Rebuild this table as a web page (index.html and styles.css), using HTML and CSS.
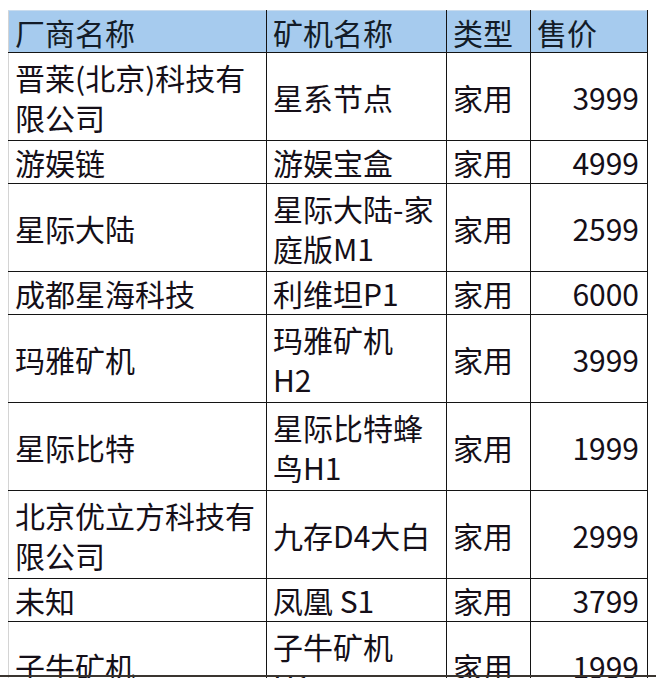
FILE: index.html
```html
<!DOCTYPE html>
<html lang="zh-CN">
<head>
<meta charset="utf-8">
<title>矿机列表</title>
<link rel="stylesheet" href="styles.css">
</head>
<body>
<table class="sheet">
  <colgroup>
    <col class="c-vendor">
    <col class="c-model">
    <col class="c-type">
    <col class="c-price">
  </colgroup>
  <thead>
    <tr class="head">
      <th>厂商名称</th>
      <th>矿机名称</th>
      <th>类型</th>
      <th>售价</th>
    </tr>
  </thead>
  <tbody>
    <tr class="tall">
      <td>晋莱(北京)科技有<br>限公司</td>
      <td>星系节点</td>
      <td>家用</td>
      <td class="num">3999</td>
    </tr>
    <tr class="short">
      <td>游娱链</td>
      <td>游娱宝盒</td>
      <td>家用</td>
      <td class="num">4999</td>
    </tr>
    <tr class="tall">
      <td>星际大陆</td>
      <td>星际大陆-家<br>庭版M1</td>
      <td>家用</td>
      <td class="num">2599</td>
    </tr>
    <tr class="short">
      <td>成都星海科技</td>
      <td>利维坦P1</td>
      <td>家用</td>
      <td class="num">6000</td>
    </tr>
    <tr class="tall">
      <td>玛雅矿机</td>
      <td>玛雅矿机<br>H2</td>
      <td>家用</td>
      <td class="num">3999</td>
    </tr>
    <tr class="tall">
      <td>星际比特</td>
      <td>星际比特蜂<br>鸟H1</td>
      <td>家用</td>
      <td class="num">1999</td>
    </tr>
    <tr class="tall">
      <td>北京优立方科技有<br>限公司</td>
      <td>九存D4大白</td>
      <td>家用</td>
      <td class="num">2999</td>
    </tr>
    <tr class="short">
      <td>未知</td>
      <td>凤凰 S1</td>
      <td>家用</td>
      <td class="num">3799</td>
    </tr>
    <tr class="tall">
      <td>子牛矿机</td>
      <td>子牛矿机<br>H1</td>
      <td>家用</td>
      <td class="num">1999</td>
    </tr>
  </tbody>
</table>
<div class="edge"></div>
</body>
</html>
```

FILE: styles.css
```css
html, body {
  margin: 0;
  padding: 0;
  overflow: hidden;
  background: #ffffff;
  height: 678px;
}

body {
  font-family: "Noto Sans CJK SC", "Noto Sans", sans-serif;
  color: #150f18;
  position: relative;
}

.sheet {
  margin: 10px 0 0 8px;
  width: 639px;
  table-layout: fixed;
  border-collapse: collapse;
  font-size: 30px;
  line-height: 40px;
}

.c-vendor { width: 258px; }
.c-model { width: 180px; }
.c-type { width: 84px; }
.c-price { width: 117px; }

.sheet th,
.sheet td {
  padding: 0 6px;
  vertical-align: middle;
  text-align: left;
  font-weight: normal;
  white-space: nowrap;
  border: 1px solid #141414;
}

.sheet th:first-child,
.sheet td:first-child {
  border-left: 1px solid #d4d4d4;
}

.head th {
  background: #a6cbee;
  color: #131c28;
  border-top: 1px solid #c9dcee;
  height: 41px;
}

.tall td { height: 87px; }
.short td { height: 42px; }

.sheet td.num {
  text-align: right;
  padding-right: 8px;
}

.edge {
  position: absolute;
  left: 0;
  top: 675px;
  width: 656px;
  height: 2px;
  background: #3a3530;
}
```
